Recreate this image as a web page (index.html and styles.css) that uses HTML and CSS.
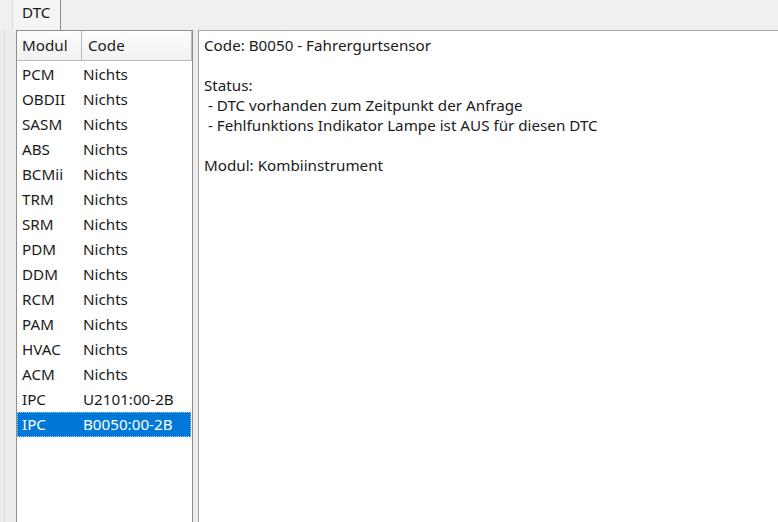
FILE: index.html
```html
<!DOCTYPE html>
<html lang="de">
<head>
  <meta charset="UTF-8">
  <title>DTC</title>
  <link rel="stylesheet" href="styles.css">
</head>
<body>
  <div class="tabbar">
    <div class="tab">DTC</div>
  </div>

  <div class="tabpage">
    <div class="list">
      <div class="list-head">
        <div class="col-modul">Modul</div>
        <div class="col-code">Code</div>
      </div>
      <div class="row"><span class="col-modul">PCM</span><span class="col-code">Nichts</span></div>
      <div class="row"><span class="col-modul">OBDII</span><span class="col-code">Nichts</span></div>
      <div class="row"><span class="col-modul">SASM</span><span class="col-code">Nichts</span></div>
      <div class="row"><span class="col-modul">ABS</span><span class="col-code">Nichts</span></div>
      <div class="row"><span class="col-modul">BCMii</span><span class="col-code">Nichts</span></div>
      <div class="row"><span class="col-modul">TRM</span><span class="col-code">Nichts</span></div>
      <div class="row"><span class="col-modul">SRM</span><span class="col-code">Nichts</span></div>
      <div class="row"><span class="col-modul">PDM</span><span class="col-code">Nichts</span></div>
      <div class="row"><span class="col-modul">DDM</span><span class="col-code">Nichts</span></div>
      <div class="row"><span class="col-modul">RCM</span><span class="col-code">Nichts</span></div>
      <div class="row"><span class="col-modul">PAM</span><span class="col-code">Nichts</span></div>
      <div class="row"><span class="col-modul">HVAC</span><span class="col-code">Nichts</span></div>
      <div class="row"><span class="col-modul">ACM</span><span class="col-code">Nichts</span></div>
      <div class="row"><span class="col-modul">IPC</span><span class="col-code">U2101:00-2B</span></div>
      <div class="row selected"><span class="col-modul">IPC</span><span class="col-code">B0050:00-2B</span></div>
    </div>

    <div class="detail">
      <div>Code: B0050 - Fahrergurtsensor</div>
      <div>&nbsp;</div>
      <div>Status:</div>
      <div>&nbsp;- DTC vorhanden zum Zeitpunkt der Anfrage</div>
      <div>&nbsp;- Fehlfunktions Indikator Lampe ist AUS für diesen DTC</div>
      <div>&nbsp;</div>
      <div>Modul: Kombiinstrument</div>
    </div>
  </div>
</body>
</html>
```

FILE: styles.css
```css
/* Windows forms look: tab control, list view and a text box */
body {
  margin: 0;
  height: 522px;
  overflow: hidden;
  background: #f0f0f0;
  font-family: "Noto Sans", "Open Sans", sans-serif;
  font-size: 15.2px;
  color: #1a1a1a;
  display: flex;
  flex-direction: column;
}

/* ***** Tabs ***** */
.tabbar {
  height: 30px;
  padding-left: 12px;
  display: flex;
  box-sizing: border-box;
}

.tab {
  width: 49px;
  margin-top: -2px;
  padding: 4px 0 0 9px;
  box-sizing: border-box;
  border-left: 1px solid #d9d9d9;
  border-right: 1px solid #8c8c8c;
  background: #f4f4f4;
  line-height: 20px;
}

/* ***** Tab page ***** */
.tabpage {
  flex: 1;
  display: flex;
  padding-left: 16px;
  background: linear-gradient(to right, #ececec 0 4px, #dadada 4px 5px, #ececec 5px);
  min-height: 0;
}

/* ***** List view ***** */
.list {
  width: 177px;
  box-sizing: border-box;
  border: 1px solid #8f8f8f;
  border-bottom: none;
  background: #fff;
}

.list-head {
  display: flex;
  height: 30px;
  margin-bottom: 1px;
  line-height: 29px;
  background: linear-gradient(#fdfdfd, #f1f1f1);
  border-bottom: 1px solid #b9b9b9;
  box-sizing: border-box;
}

.list-head > div {
  box-sizing: border-box;
  padding-left: 5px;
}

.list-head .col-modul {
  width: 65px;
  border-right: 1px solid #b9b9b9;
}

.list-head .col-code {
  flex: 1;
  padding-left: 6px;
  border-right: 1px solid #b9b9b9;
}

.row {
  display: flex;
  height: 25px;
  line-height: 25px;
  padding-left: 5px;
}

.row .col-modul {
  width: 61px;
}

.row.selected {
  margin-right: 1px;
  background: #0078d7;
  color: #fff;
  outline: 1px dotted #9ec7ee;
  outline-offset: -1px;
}

/* ***** Detail text box ***** */
.detail {
  flex: 1;
  margin-left: 5px;
  padding: 4px 5px;
  background: #fff;
  border-left: 1px solid #a0a0a0;
  border-top: 1px solid #a9a9a9;
  line-height: 20px;
  white-space: nowrap;
}
```
